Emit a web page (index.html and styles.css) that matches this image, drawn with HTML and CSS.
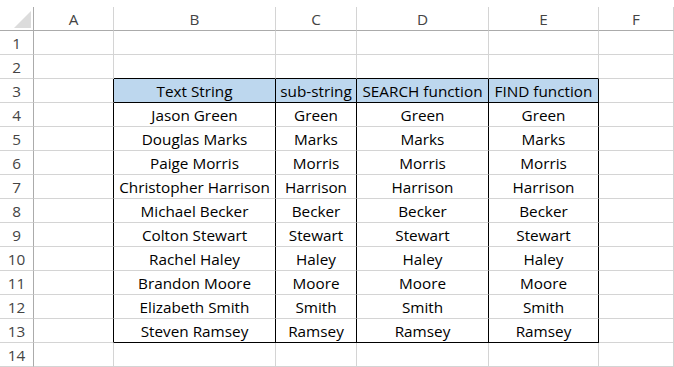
FILE: index.html
```html
<!DOCTYPE html>
<html>
<head>
<meta charset="utf-8">
<link rel="stylesheet" href="styles.css">
</head>
<body>
<div class="sheet">
  <div class="c hd corner"><span class="tri"></span></div>
  <div class="c hd">A</div>
  <div class="c hd">B</div>
  <div class="c hd">C</div>
  <div class="c hd">D</div>
  <div class="c hd">E</div>
  <div class="c hd">F</div>

  <div class="c rh">1</div><div class="c"></div><div class="c"></div><div class="c"></div><div class="c"></div><div class="c"></div><div class="c"></div>
  <div class="c rh">2</div><div class="c"></div><div class="c tb"></div><div class="c tb"></div><div class="c tb"></div><div class="c tb"></div><div class="c"></div>

  <div class="c rh">3</div><div class="c tl"></div><div class="c th">Text String</div><div class="c th">sub-string</div><div class="c th">SEARCH function</div><div class="c th">FIND function</div><div class="c"></div>

  <div class="c rh">4</div><div class="c tl"></div><div class="c td">Jason Green</div><div class="c td">Green</div><div class="c td">Green</div><div class="c td">Green</div><div class="c"></div>
  <div class="c rh">5</div><div class="c tl"></div><div class="c td">Douglas Marks</div><div class="c td">Marks</div><div class="c td">Marks</div><div class="c td">Marks</div><div class="c"></div>
  <div class="c rh">6</div><div class="c tl"></div><div class="c td">Paige Morris</div><div class="c td">Morris</div><div class="c td">Morris</div><div class="c td">Morris</div><div class="c"></div>
  <div class="c rh">7</div><div class="c tl"></div><div class="c td">Christopher Harrison</div><div class="c td">Harrison</div><div class="c td">Harrison</div><div class="c td">Harrison</div><div class="c"></div>
  <div class="c rh">8</div><div class="c tl"></div><div class="c td">Michael Becker</div><div class="c td">Becker</div><div class="c td">Becker</div><div class="c td">Becker</div><div class="c"></div>
  <div class="c rh">9</div><div class="c tl"></div><div class="c td">Colton Stewart</div><div class="c td">Stewart</div><div class="c td">Stewart</div><div class="c td">Stewart</div><div class="c"></div>
  <div class="c rh">10</div><div class="c tl"></div><div class="c td">Rachel Haley</div><div class="c td">Haley</div><div class="c td">Haley</div><div class="c td">Haley</div><div class="c"></div>
  <div class="c rh">11</div><div class="c tl"></div><div class="c td">Brandon Moore</div><div class="c td">Moore</div><div class="c td">Moore</div><div class="c td">Moore</div><div class="c"></div>
  <div class="c rh">12</div><div class="c tl"></div><div class="c td">Elizabeth Smith</div><div class="c td">Smith</div><div class="c td">Smith</div><div class="c td">Smith</div><div class="c"></div>
  <div class="c rh">13</div><div class="c tl"></div><div class="c td last">Steven Ramsey</div><div class="c td last">Ramsey</div><div class="c td last">Ramsey</div><div class="c td last">Ramsey</div><div class="c"></div>

  <div class="c rh">14</div><div class="c"></div><div class="c"></div><div class="c"></div><div class="c"></div><div class="c"></div><div class="c"></div>
</div>
</body>
</html>
```

FILE: styles.css
```css
html, body {
  margin: 0;
  padding: 0;
  background: #ffffff;
  overflow: hidden;
}

body {
  padding-top: 7px;
  font-family: "Open Sans", "Liberation Sans", sans-serif;
  font-size: 15.3px;
  color: #000000;
}

.sheet {
  display: grid;
  grid-template-columns: 34px 80px 162px 81px 132px 110px 1fr;
  grid-auto-rows: 24px;
}

.c {
  box-sizing: border-box;
  border-right: 1px solid #d4d4d4;
  border-bottom: 1px solid #d4d4d4;
  display: flex;
  align-items: center;
  justify-content: center;
  padding-top: 1px;
  line-height: 23px;
  white-space: nowrap;
  overflow: hidden;
}

.hd {
  color: #444444;
  border-bottom-color: #ababab;
}

.rh {
  color: #444444;
  border-right-color: #ababab;
}

.corner {
  align-items: flex-end;
  justify-content: flex-end;
  padding: 0 2px 2px 0;
  border-right-color: #ababab;
}

.tri {
  width: 0;
  height: 0;
  border-left: 17px solid transparent;
  border-bottom: 17px solid #dcdcdc;
}

.tb {
  border-bottom-color: #000000;
}

.tl {
  border-right-color: #000000;
}

.th {
  background: #bdd7ee;
  border-right-color: #000000;
  border-bottom-color: #000000;
}

.td {
  border-right-color: #000000;
}

.td.last {
  border-bottom-color: #000000;
}
```
